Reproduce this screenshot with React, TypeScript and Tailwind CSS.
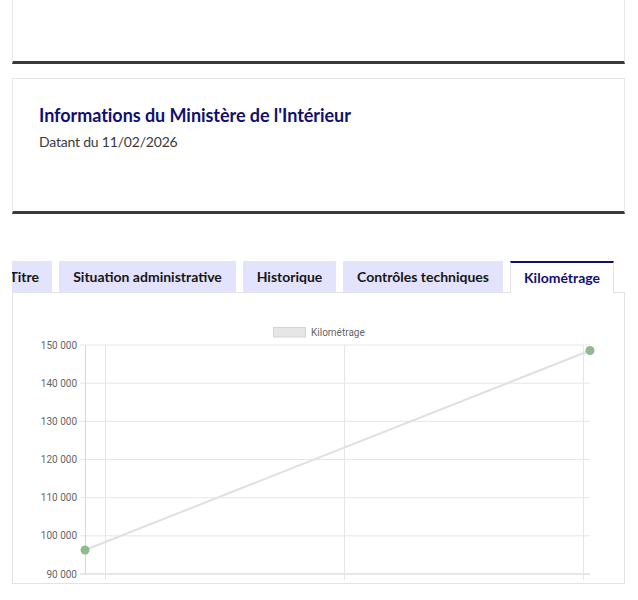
import React from "react";

const OX = 13;
const OY = 293;

export default function App() {
  const yLabels = ["150 000", "140 000", "130 000", "120 000", "110 000", "100 000", "90 000"];
  const top = 345;
  const step = (574 - 345) / 6;
  const gx = (x: number) => x - OX;
  const gy = (y: number) => y - OY;
  return (
    <div className="w-[638px] h-[600px] bg-white overflow-hidden" style={{ fontFamily: 'Lato, "Noto Sans", sans-serif' }}>
      <div className="ml-[12px] w-[613px] h-[64px] border-x border-[#e8e8e8] border-b-[3px] border-b-[#3a3a3a]" />
      <div className="ml-[12px] mt-[14px] w-[613px] h-[136px] border-x border-t border-[#e8e8e8] border-b-[3px] border-b-[#3a3a3a] pt-[24px] px-[26px]">
        <div className="text-[18px] leading-[24px] font-bold text-[#101070] tracking-[-0.05px]">Informations du Ministère de l'Intérieur</div>
        <div className="mt-[3px] text-[14px] leading-[24px] text-[#3a3a3a] tracking-[-0.2px]">Datant du 11/02/2026</div>
      </div>
      <div className="ml-[12px] mt-[47px] w-[613px] flex items-start gap-[7px] relative z-10 overflow-hidden h-[32px]">
        <div className="w-[40px] shrink-0 h-[31px] bg-[#e3e3fd] flex items-center justify-end pr-[13px] overflow-hidden text-[14px] font-bold text-[#161616] whitespace-nowrap">Titre</div>
        <div className="w-[177px] shrink-0 h-[31px] bg-[#e3e3fd] flex items-center justify-center text-[14px] font-bold text-[#161616] whitespace-nowrap">Situation administrative</div>
        <div className="w-[93px] shrink-0 h-[31px] bg-[#e3e3fd] flex items-center justify-center text-[14px] font-bold text-[#161616] whitespace-nowrap">Historique</div>
        <div className="w-[160px] shrink-0 h-[31px] bg-[#e3e3fd] flex items-center justify-center text-[14px] font-bold text-[#161616] whitespace-nowrap">Contrôles techniques</div>
        <div className="w-[104px] shrink-0 h-[32px] bg-white border-t-2 border-t-[#101070] border-x border-x-[#e3e3e3] flex items-center justify-center pb-[1px] text-[14px] font-bold text-[#101070] whitespace-nowrap">Kilométrage</div>
      </div>
      <div className="ml-[12px] mt-[-1px] w-[613px] h-[292px] border border-[#e3e3e3]">
        <svg width="611" height="290" className="block" style={{ fontFamily: 'Roboto, "Liberation Sans", sans-serif' }}>
          <rect x={gx(273.5)} y={gy(327.5)} width="32" height="9.5" fill="#e6e6e6" stroke="#d4d4d4" strokeWidth="1" />
          <text x={gx(311)} y={gy(336)} fontSize="10" fill="#666">Kilométrage</text>
          {yLabels.map((l, i) => {
            const y = top + step * i;
            return (
              <g key={l}>
                <line x1={gx(80)} x2={gx(590)} y1={gy(y)} y2={gy(y)} stroke={i === 6 ? "#cfcfcf" : "#e6e6e6"} strokeWidth="1" />
                <text x={gx(77)} y={gy(y) + 3.5} fontSize="10" fill="#666" textAnchor="end">{l}</text>
              </g>
            );
          })}
          <line x1={gx(85.5)} x2={gx(85.5)} y1={gy(345)} y2={gy(574)} stroke="#d8d8d8" strokeWidth="1" />
          {[105.5, 344.5, 583.5].map((x) => (
            <line key={x} x1={gx(x)} x2={gx(x)} y1={gy(345)} y2={gy(580)} stroke="#e6e6e6" strokeWidth="1" />
          ))}
          <line x1={gx(85)} y1={gy(550)} x2={gx(590)} y2={gy(350.5)} stroke="#e0e0e0" strokeWidth="2" />
          <circle cx={gx(85)} cy={gy(550)} r="4.5" fill="#8fbc8f" />
          <circle cx={gx(590)} cy={gy(350.5)} r="4.5" fill="#8fbc8f" />
        </svg>
      </div>
    </div>
  );
}
